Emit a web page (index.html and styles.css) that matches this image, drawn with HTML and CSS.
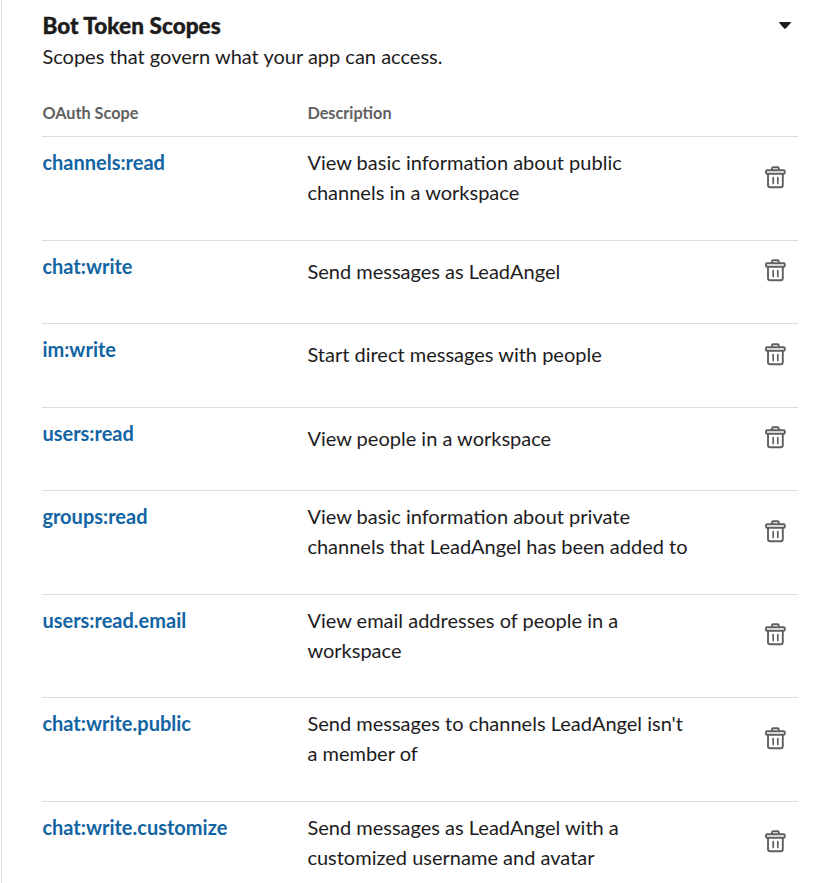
FILE: index.html
```html
<!DOCTYPE html>
<html lang="en">
<head>
    <meta charset="UTF-8">
    <meta name="viewport" content="width=device-width, initial-scale=1.0">
    <title>Bot Token Scopes</title>
    <link rel="stylesheet" href="styles.css">
</head>
<body>
<svg class="sprite" aria-hidden="true">
    <symbol id="trash" viewBox="0 0 22 24">
        <g fill="none" stroke="currentColor" stroke-width="1.9" stroke-linecap="round" stroke-linejoin="round">
            <path d="M7.9 5V3.8Q7.9 2.3 9.4 2.3H13.4Q14.9 2.3 14.9 3.8V5"/>
            <rect x="2" y="5.2" width="18.8" height="3.5" rx="1"/>
            <path d="M4 8.9V20.2Q4 22.3 6.1 22.3H16.7Q18.8 22.3 18.8 20.2V8.9"/>
            <path d="M9.2 12.6V18.4M13.8 12.6V18.4" stroke-width="1.7"/>
        </g>
    </symbol>
</svg>

<main class="panel">
    <header class="panel-header">
        <div>
            <h4>Bot Token Scopes</h4>
            <p>Scopes that govern what your app can access.</p>
        </div>
        <svg class="caret" viewBox="0 0 12 7"><path d="M0.5 0H11.5Q12.2 0.3 11.7 1L6.8 6.5Q6 7.2 5.2 6.5L0.3 1Q-0.2 0.3 0.5 0Z"/></svg>
    </header>

    <div class="row row-head">
        <span>OAuth Scope</span>
        <span>Description</span>
    </div>
    <div class="row">
        <a class="scope" href="#">channels:read</a>
        <p class="desc">View basic information about public channels in a workspace</p>
        <button class="delete" aria-label="Delete"><svg><use href="#trash"/></svg></button>
    </div>
    <div class="row single">
        <a class="scope" href="#">chat:write</a>
        <p class="desc">Send messages as LeadAngel</p>
        <button class="delete" aria-label="Delete"><svg><use href="#trash"/></svg></button>
    </div>
    <div class="row single">
        <a class="scope" href="#">im:write</a>
        <p class="desc">Start direct messages with people</p>
        <button class="delete" aria-label="Delete"><svg><use href="#trash"/></svg></button>
    </div>
    <div class="row single">
        <a class="scope" href="#">users:read</a>
        <p class="desc">View people in a workspace</p>
        <button class="delete" aria-label="Delete"><svg><use href="#trash"/></svg></button>
    </div>
    <div class="row">
        <a class="scope" href="#">groups:read</a>
        <p class="desc">View basic information about private channels that LeadAngel has been added to</p>
        <button class="delete" aria-label="Delete"><svg><use href="#trash"/></svg></button>
    </div>
    <div class="row">
        <a class="scope" href="#">users:read.email</a>
        <p class="desc">View email addresses of people in a workspace</p>
        <button class="delete" aria-label="Delete"><svg><use href="#trash"/></svg></button>
    </div>
    <div class="row">
        <a class="scope" href="#">chat:write.public</a>
        <p class="desc">Send messages to channels LeadAngel isn't a member of</p>
        <button class="delete" aria-label="Delete"><svg><use href="#trash"/></svg></button>
    </div>
    <div class="row">
        <a class="scope" href="#">chat:write.customize</a>
        <p class="desc">Send messages as LeadAngel with a customized username and avatar</p>
        <button class="delete" aria-label="Delete"><svg><use href="#trash"/></svg></button>
    </div>
</main>
</body>
</html>
```
FILE: styles.css
```css
:root{
    --text:#1d1c1d; --muted:#616061; --link:#1264a3; --border:#dddddd;
}
*{box-sizing:border-box;}
body{
    margin:0; height:883px; overflow:hidden;
    font:20px/30px Lato, sans-serif;
    background:#fff; color:var(--text);
}
h4,p{margin:0;}
.sprite{display:none;}
.panel{
    height:883px; margin-left:1px; padding:11px 21px 0 40px;
    border-left:1px solid var(--border); overflow:hidden;
}
.panel-header{display:flex;justify-content:space-between;height:87px;padding-left:0.4px;}
.panel-header h4{font-size:22.5px;font-weight:900;letter-spacing:0.06px;-webkit-text-stroke:0.4px var(--text);}
.panel-header p{line-height:30px;}
.caret{width:12px;height:7px;margin:11px 7px 0 0;fill:var(--text);}
.row{
    display:grid;grid-template-columns:265px 390px 1fr;
    height:103.6px;padding:10px 0 0 0.4px;
    border-top:1px solid var(--border);
}
.row-head{
    height:38.2px;padding-top:0;border-top:none;
    font-size:16.25px;font-weight:700;color:var(--muted);
}
.scope{font-weight:700;color:var(--link);text-decoration:none;}
.delete{
    justify-self:end;width:22px;height:24px;margin:17.6px 12px 0 0;padding:0;
    border:none;background:none;color:var(--muted);cursor:pointer;
}
.delete svg{display:block;width:22px;height:24px;}
.single{height:83.4px;}
.single .desc{padding-top:5px;}
.single .delete{margin-top:7.6px;}
```
